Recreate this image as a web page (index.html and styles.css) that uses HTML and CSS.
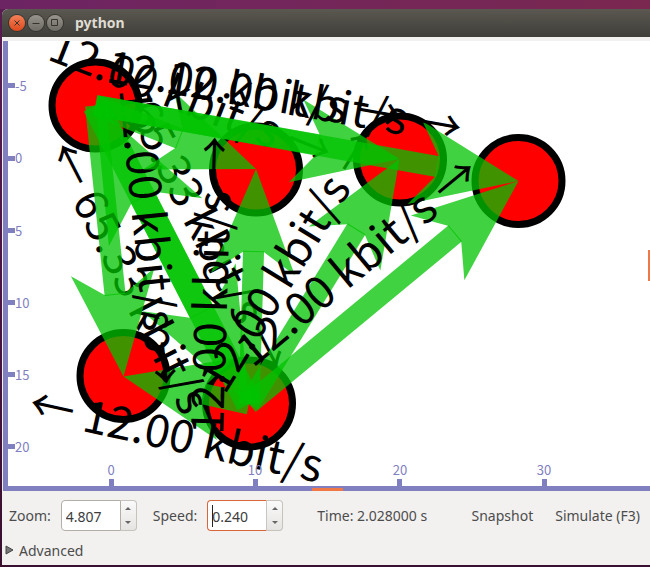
FILE: index.html
```html
<!DOCTYPE html>
<html lang="en">
<head>
<meta charset="utf-8">
<title>python</title>
<link rel="stylesheet" href="styles.css">
</head>
<body>
<main class="window">
  <header class="titlebar">
    <button class="wbtn close" aria-label="Close"><svg viewBox="0 0 16 16"><path d="M5.500 5.500l5 5M10.500 5.500l-5 5"/></svg></button>
    <button class="wbtn" aria-label="Minimize"><svg viewBox="0 0 16 16"><path d="M4.500 8.500h7"/></svg></button>
    <button class="wbtn" aria-label="Maximize"><svg viewBox="0 0 16 16"><path d="M4.500 4.500h6v6h-6z"/></svg></button>
    <h1>python</h1>
  </header>
  <section class="view">
    <svg class="scene" viewBox="3 41 647 450" preserveAspectRatio="xMinYMin slice">
      <g class="nodes">
        <circle cx="95.500" cy="105.500" r="43.500"/>
        <circle cx="256" cy="169.500" r="43.500"/>
        <circle cx="400" cy="159.500" r="43.500"/>
        <circle cx="518.500" cy="181" r="43.500"/>
        <circle cx="123.500" cy="376" r="43.500"/>
        <circle cx="249" cy="403.500" r="43.500"/>
      </g>
      <g id="links"></g>
      <g class="axis">
        <path d="M3 41h5v445h642v5H3z"/>
        <path d="M8 83h7v5H8zM8 156h7v5H8zM8 228h7v5H8zM8 300h7v5H8zM8 372h7v5H8zM8 444h7v5H8z"/>
        <path d="M109 479h5v7h-5zM253 479h5v7h-5zM397 479h5v7h-5zM542 479h5v7h-5z"/>
        <path class="mark" d="M312 488h31v3h-31zM648 250h2v31h-2z"/>
        <text x="15" y="91">-5</text>
        <text x="15" y="163">0</text>
        <text x="15" y="236">5</text>
        <text x="15" y="308">10</text>
        <text x="15" y="380">15</text>
        <text x="15" y="452">20</text>
        <g text-anchor="middle">
          <text x="111" y="475">0</text>
          <text x="255" y="475">10</text>
          <text x="400" y="475">20</text>
          <text x="544" y="475">30</text>
        </g>
      </g>
    </svg>
  </section>
  <form class="controls">
    <label for="zoom">Zoom:</label>
    <div class="spin">
      <input id="zoom" type="text" value="4.807">
      <div class="steps"><button type="button" aria-label="Zoom up"><i class="up"></i></button><button type="button" aria-label="Zoom down"><i class="down"></i></button></div>
    </div>
    <label for="speed">Speed:</label>
    <div class="spin active">
      <input id="speed" type="text" value="0.240">
      <div class="steps"><button type="button" aria-label="Speed up"><i class="up"></i></button><button type="button" aria-label="Speed down"><i class="down"></i></button></div>
    </div>
    <output class="time">Time: 2.028000 s</output>
    <button type="button" class="flat">Snapshot</button>
    <button type="button" class="flat">Simulate (F3)</button>
  </form>
  <details class="advanced"><summary><svg viewBox="0 0 9 11"><path d="M1 1L8 5L1 9z"/></svg>Advanced</summary></details>
</main>
<script src="links.js"></script>
</body>
</html>
```
FILE: links.js
```js
const nodes = {
  A: [95.5, 105.5], B: [256, 169], C: [399.5, 159],
  D: [518.5, 181], E: [123.5, 376.5], F: [249, 404]
};
// forward is the rate from a to b, back the rate from b to a.
const links = [
  { a: 'E', b: 'F', back: '12.00', size: 1 },
  { a: 'A', b: 'F', back: '65.33', forward: '65.33', size: 1.25 },
  { a: 'A', b: 'E', forward: '12.00', size: 1 },
  { a: 'A', b: 'B', forward: '12.00', size: 1 },
  { a: 'F', b: 'B', forward: '12.00', size: 1 },
  { a: 'F', b: 'C', forward: '12.00', size: 1 },
  { a: 'A', b: 'C', forward: '12.00', size: 1 },
  { a: 'A', b: 'D', forward: '12.00', size: 1 },
  { a: 'F', b: 'D', forward: '12.00', size: 1 }
];
const layer = document.getElementById('links');
function add(tag, attrs, text) {
  const el = document.createElementNS('http://www.w3.org/2000/svg', tag);
  for (const key in attrs) el.setAttribute(key, attrs[key]);
  if (text) el.textContent = text;
  layer.append(el);
}
function arrow(from, to, k) {
  const len = Math.hypot(to[0] - from[0], to[1] - from[1]);
  const deg = Math.atan2(to[1] - from[1], to[0] - from[0]) * 180 / Math.PI;
  const transform = `translate(${from}) rotate(${deg})`;
  const neck = len - 83 * k, wing = len - 105 * k, w = 10.5 * k;
  add('path', { class: 'flow', transform, d: `M0 ${-w}H${neck + 1}V${w}H0z` });
  add('path', { class: 'flow', transform,
    d: `M${neck} ${-w}L${wing} ${-42 * k}L${len} 0L${wing} ${42 * k}L${neck} ${w}z` });
}
for (const l of links) {
  const a = nodes[l.a], b = nodes[l.b];
  const deg = Math.atan2(b[1] - a[1], b[0] - a[0]) * 180 / Math.PI;
  const transform = `translate(${(a[0] + b[0]) / 2} ${(a[1] + b[1]) / 2}) rotate(${deg})`;
  if (l.forward) {
    arrow(a, b, l.size);
    add('text', { class: 'rate', transform, y: -25 }, l.forward + ' kbit/s →');
  }
  if (l.back) {
    arrow(b, a, l.size);
    add('text', { class: 'rate', transform, y: 50 + 12 * l.size }, '← ' + l.back + ' kbit/s');
  }
}
```
FILE: styles.css
```css
* { box-sizing: border-box; }
body {
  margin: 0;
  padding: 9px 0 2px 2px;
  background: linear-gradient(90deg, #6d2463, #7a2850) top / 100% 9px no-repeat, linear-gradient(#5c1d52, #3a0f30);
  font-family: "Noto Sans", sans-serif;
  font-size: 14px;
  color: #4c4c4c;
}
.window { background: #f2f1f0; border-radius: 6px 0 0 0; overflow: hidden; }
.titlebar {
  display: flex;
  align-items: center;
  gap: 3px;
  height: 28px;
  padding-left: 7px;
  background: linear-gradient(#5a5850, #3f3e39);
}
.titlebar h1 {
  margin: 0 0 0 9px;
  font: bold 14px/20px "Noto Sans", sans-serif;
  color: #dfdbd2;
}
.wbtn {
  width: 16px;
  height: 16px;
  padding: 0;
  border: 0;
  border-radius: 50%;
  background: linear-gradient(#96948c, #6d6b64);
  box-shadow: 0 0 0 1px #35342f;
}
.wbtn.close { background: linear-gradient(#f58058, #dd4a1c); }
.wbtn svg { display: block; fill: none; stroke: #35342f; stroke-width: 1; }
.view { margin: 4px 0 0 1px; background: #fff; }
.scene { display: block; width: 100%; height: 450px; }
.nodes circle { fill: #f00; stroke: #000; stroke-width: 7px; }
.flow { fill: rgb(0 195 0 / 0.75); }
.rate { font: 45px "Noto Sans CJK SC", sans-serif; text-anchor: middle; }
.axis { fill: #8080c0; font: 13px "Noto Sans CJK SC", sans-serif; }
.axis .mark { fill: #f07746; }
.controls {
  display: flex;
  align-items: center;
  padding: 9px 10px 0 7px;
}
.controls label { margin-right: 10px; }
.spin { display: flex; width: 76px; height: 31px; margin-right: 16px; }
.spin input {
  width: 60px;
  border: 1px solid #b3aea6;
  border-radius: 4px 0 0 4px;
  padding: 2px 4px 0;
  background: #fff;
  font: 14px "Noto Sans", sans-serif;
  color: #3c3c3c;
}
.spin.active input {
  border-color: #d9663b;
  border-right-color: #c9c5c0;
  background: linear-gradient(#222, #222) 4px 4px / 1px 22px no-repeat #fff;
}
.steps {
  display: flex;
  flex-direction: column;
  width: 16px;
  border: 1px solid #c6c2bc;
  border-left: 0;
  border-radius: 0 4px 4px 0;
  background: linear-gradient(#fafafa, #e6e4e2);
}
.steps button {
  flex: 1;
  display: flex;
  align-items: center;
  justify-content: center;
  padding: 0;
  border: 0;
  background: none;
}
.steps i { border: 3px solid transparent; }
.steps .up { border-bottom-color: #666; border-top: 0; }
.steps .down { border-top-color: #666; border-bottom: 0; }
.time { margin: 0 auto 0 18px; }
.flat {
  margin-left: 22px;
  padding: 0;
  border: 0;
  background: none;
  font: 14px "Noto Sans", sans-serif;
  color: inherit;
}
.advanced { padding: 10px 3px 5px; line-height: 19px; }
.advanced summary { display: flex; align-items: center; gap: 5px; list-style: none; }
.advanced svg { width: 9px; height: 11px; fill: #777; stroke: #444; }
```
